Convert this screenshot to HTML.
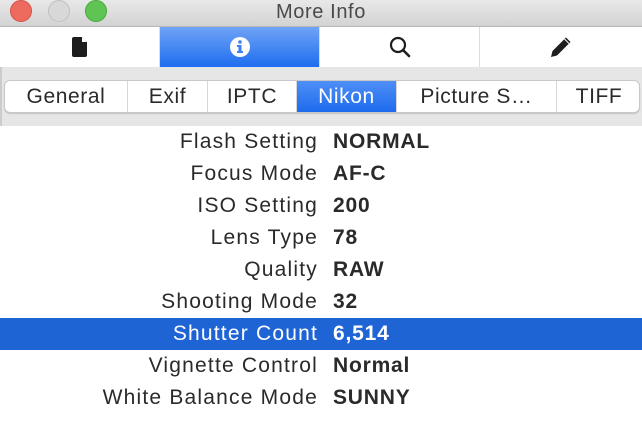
<!DOCTYPE html>
<html><head><style>
*{margin:0;padding:0;box-sizing:border-box}
body{width:642px;height:444px;overflow:hidden;background:#fff;font-family:"Liberation Sans",sans-serif;position:relative}
.title{position:absolute;left:0;top:0;width:642px;height:27px;background:linear-gradient(#e8e8e8,#d3d3d3);border-bottom:1px solid #b8b8b8;text-align:center;font-size:20px;line-height:24px;color:#4a4a4a;letter-spacing:0.6px}
.dot{position:absolute;top:0px;width:22px;height:22px;border-radius:50%}
.tb{position:absolute;top:27px;height:40px;width:160px;background:#fff;border-right:1px solid #ddd;display:flex;align-items:center;justify-content:center}
.strip{position:absolute;left:0;top:67px;width:642px;height:59px;background:#e6e6e6;border-left:2px solid #ccc}
.seg{position:absolute;left:4px;top:80px;width:636px;height:33px;background:#fff;border:1px solid #c8c8c8;border-radius:6px;overflow:hidden;box-shadow:0 1px 1px rgba(0,0,0,.15)}
.s{position:absolute;top:0;height:31px;font-size:21px;line-height:31px;text-align:center;color:#2a2a2a;border-right:1px solid #d6d6d6;letter-spacing:0.6px}
.row{position:absolute;left:0;width:642px;height:32px;font-size:21px;line-height:32px;color:#2a2a2a;letter-spacing:1.2px}
.row .l{position:absolute;right:324px;white-space:nowrap}
.row .v{position:absolute;left:333px;font-weight:bold;white-space:nowrap;letter-spacing:0.8px}
.hl{background:#1f64d4;color:#fff}
</style></head><body>
<div class="title">More Info
<div class="dot" style="left:10px;background:#ee6a5f;border:1px solid #d65045"></div>
<div class="dot" style="left:48px;background:#d8d8d8;border:1px solid #c0c0c0"></div>
<div class="dot" style="left:85px;background:#5fc453;border:1px solid #48a83d"></div>
</div>
<div class="tb" style="left:0"><svg width="16" height="20" viewBox="0 0 16 20"><path d="M2 0H10L15 5V18Q15 20 13 20H2Q0 20 0 18V2Q0 0 2 0Z" fill="#1e1e1e"/><path d="M10 0V5H15" fill="#fff"/></svg></div>
<div class="tb" style="left:160px;background:linear-gradient(#6fa3f5,#1e6ef0);border-right:1px solid #ddd"><svg width="22" height="22" viewBox="0 0 22 22"><circle cx="11" cy="11" r="10" fill="#fff"/><circle cx="11" cy="6" r="1.8" fill="#3a80f2"/><path d="M8 9H12.5V15H14V17H8V15H9.5V11H8Z" fill="#3a80f2"/></svg></div>
<div class="tb" style="left:320px"><svg width="22" height="22" viewBox="0 0 22 22"><circle cx="9" cy="9" r="7" fill="none" stroke="#1e1e1e" stroke-width="2.2"/><path d="M14 14L20 20" stroke="#1e1e1e" stroke-width="2.6" stroke-linecap="round"/></svg></div>
<div class="tb" style="left:480px;width:162px;border-right:none"><svg width="24" height="24" viewBox="0 0 24 24"><path d="M2 22L3.5 16L17 2.5L21.5 7L8 20.5Z" fill="#1e1e1e"/><path d="M15.5 4L20 8.5" stroke="#fff" stroke-width="1"/></svg></div>
<div class="strip"></div>
<div class="seg">
<div class="s" style="left:0;width:123px">General</div>
<div class="s" style="left:123px;width:80px">Exif</div>
<div class="s" style="left:203px;width:89px">IPTC</div>
<div class="s" style="left:292px;width:100px;background:linear-gradient(#4f8ff5,#1d6bee);color:#fff">Nikon</div>
<div class="s" style="left:392px;width:160px">Picture S…</div>
<div class="s" style="left:552px;width:84px;border-right:none">TIFF</div>
</div>
<div class="row" style="top:126px"><span class="l">Flash Setting</span><span class="v">NORMAL</span></div>
<div class="row" style="top:158px"><span class="l">Focus Mode</span><span class="v">AF-C</span></div>
<div class="row" style="top:190px"><span class="l">ISO Setting</span><span class="v">200</span></div>
<div class="row" style="top:222px"><span class="l">Lens Type</span><span class="v">78</span></div>
<div class="row" style="top:254px"><span class="l">Quality</span><span class="v">RAW</span></div>
<div class="row" style="top:286px"><span class="l">Shooting Mode</span><span class="v">32</span></div>
<div class="row hl" style="top:318px"><span class="l">Shutter Count</span><span class="v">6,514</span></div>
<div class="row" style="top:350px"><span class="l">Vignette Control</span><span class="v">Normal</span></div>
<div class="row" style="top:382px"><span class="l">White Balance Mode</span><span class="v">SUNNY</span></div>
</body></html>
